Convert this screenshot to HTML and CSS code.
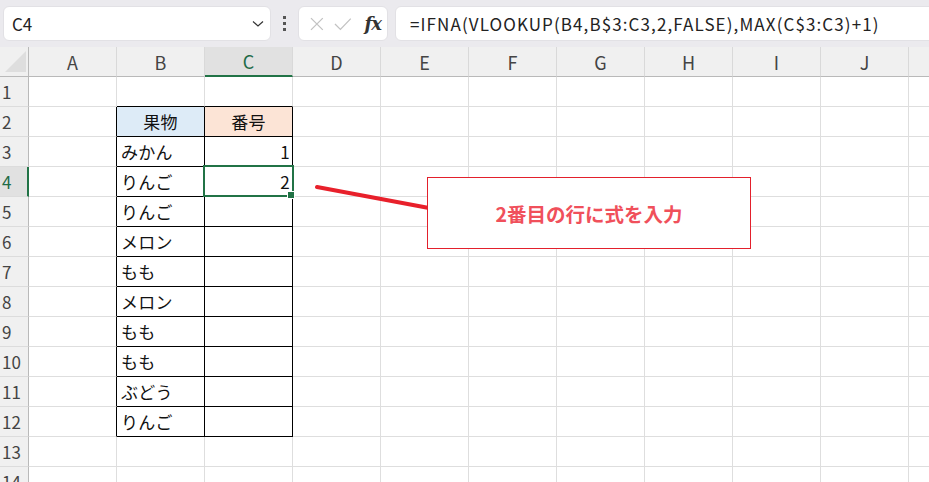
FILE: index.html
```
<!DOCTYPE html>
<html lang="ja">
<head>
    <meta charset="UTF-8">
    <title>VLOOKUP 番号</title>
    <link rel="stylesheet" href="styles.css">
</head>
<body>
    <div class="app">
        <div class="toolbar">
            <div class="namebox">
                <span>C4</span>
                <svg class="chevron" width="12" height="8" viewBox="0 0 12 8">
                    <path d="M1 1.5 L6 6 L11 1.5" fill="none" stroke="#333" stroke-width="1.2"/>
                </svg>
            </div>
            <div class="dots"><i></i><i></i><i></i></div>
            <div class="fxbox">
                <svg width="16" height="16" viewBox="0 0 16 16">
                    <path d="M2 2 L14 14 M14 2 L2 14" stroke="#c2c2c2" stroke-width="1.3" fill="none"/>
                </svg>
                <svg width="18" height="14" viewBox="0 0 18 14">
                    <path d="M1 7 L6.5 12.5 L17 1.5" stroke="#c2c2c2" stroke-width="1.3" fill="none"/>
                </svg>
                <span class="fx">fx</span>
            </div>
            <div class="formula">=IFNA(VLOOKUP(B4,B$3:C3,2,FALSE),MAX(C$3:C3)+1)</div>
        </div>

        <div class="sheet" id="sheet"></div>

        <svg class="pointer" width="120" height="30" viewBox="0 0 120 30">
            <path d="M2 4 L114 25" stroke="#e8202b" stroke-width="4" stroke-linecap="round"/>
        </svg>
        <div class="callout">2番目の行に式を入力</div>
    </div>

    <script>
        const sheet = document.getElementById('sheet');
        const colNames = ['A', 'B', 'C', 'D', 'E', 'F', 'G', 'H', 'I', 'J', 'K'];
        const data = {
            2: ['果物', '番号'],
            3: ['みかん', '1'],
            4: ['りんご', '2'],
            5: ['りんご', ''],
            6: ['メロン', ''],
            7: ['もも', ''],
            8: ['メロン', ''],
            9: ['もも', ''],
            10: ['もも', ''],
            11: ['ぶどう', ''],
            12: ['りんご', '']
        };

        function cell(cls, text) {
            const div = document.createElement('div');
            div.className = cls;
            if (text) div.textContent = text;
            sheet.appendChild(div);
            return div;
        }

        // header row
        cell('corner');
        colNames.forEach(function(name, i) {
            cell(i === 2 ? 'colhead active' : 'colhead', i < 10 ? name : '');
        });

        for (let r = 1; r <= 14; r++) {
            cell(r === 4 ? 'rowhead active' : 'rowhead', String(r));
            colNames.forEach(function(name, c) {
                let cls = 'cell';
                const inTable = r >= 2 && r <= 12;
                if (inTable && c === 0) cls += ' edge-right';
                if (r === 1 && (c === 1 || c === 2)) cls += ' edge-bottom';
                let text = '';
                if (inTable && (c === 1 || c === 2)) {
                    cls += ' boxed';
                    text = data[r][c - 1];
                    if (r === 2) cls += c === 1 ? ' head-blue' : ' head-peach';
                    else if (c === 2) cls += ' num';
                }
                if (r === 4 && c === 2) cls += ' selected';
                cell(cls, text);
            });
        }
    </script>
</body>
</html>
```

FILE: styles.css
```
* {
    margin: 0;
    padding: 0;
    box-sizing: border-box;
}

body {
    background: #fff;
    color: #222;
    font-family: "Noto Sans CJK JP", "Noto Sans", sans-serif;
    overflow: hidden;
}

.app {
    position: relative;
    width: 929px;
    height: 482px;
    overflow: hidden;
}

/* formula bar */
.toolbar {
    display: flex;
    align-items: center;
    height: 47px;
    padding-left: 3px;
    background: #ebeaee;
}

.namebox,
.fxbox,
.formula {
    flex-shrink: 0;
    height: 35px;
    background: #fff;
    border: 1px solid #e2e1e5;
    border-radius: 6px;
    display: flex;
    align-items: center;
}

.namebox {
    width: 268px;
    padding: 0 6px 0 8px;
    justify-content: space-between;
    font-size: 17px;
    color: #222;
}

.dots {
    flex-shrink: 0;
    width: 27px;
    display: flex;
    flex-direction: column;
    align-items: center;
    gap: 3px;
}

.dots i {
    display: block;
    width: 3px;
    height: 3px;
    background: #555;
}

.fxbox {
    width: 90px;
    padding: 0 6px 0 10px;
    gap: 9px;
}

.fx {
    font-family: "DejaVu Serif", "Liberation Serif", serif;
    font-style: italic;
    font-weight: bold;
    font-size: 18px;
    color: #333;
    margin-left: 4px;
    letter-spacing: -1px;
}

.formula {
    margin-left: 7px;
    width: 560px;
    padding-left: 14px;
    font-size: 17px;
    letter-spacing: 1.1px;
    color: #222;
    white-space: nowrap;
}

/* grid */
.sheet {
    display: grid;
    grid-template-columns: 29px repeat(10, 88px) 88px;
    grid-auto-rows: 30px;
}

.corner {
    background: #f0f0f0;
    border-right: 1px solid #b9b9b9;
    border-bottom: 1px solid #b9b9b9;
    position: relative;
}

.corner::after {
    content: "";
    position: absolute;
    left: 5px;
    top: 4px;
    width: 21px;
    height: 21px;
    background: #dedede;
    clip-path: polygon(100% 0, 100% 100%, 0 100%);
}

.colhead {
    background: #f0f0f0;
    border-right: 1px solid #d9d9d9;
    border-bottom: 1px solid #b9b9b9;
    display: flex;
    align-items: center;
    justify-content: center;
    font-size: 18px;
    color: #444;
}

.colhead.active {
    background: #e1e1e1;
    border-bottom: 2px solid #217346;
    color: #1e6b47;
}

.rowhead {
    background: #f0f0f0;
    border-right: 1px solid #b9b9b9;
    border-bottom: 1px solid #dcdcdc;
    display: flex;
    align-items: center;
    padding-left: 2px;
    font-size: 17px;
    color: #444;
}

.rowhead.active {
    background: #e1e1e1;
    border-right: 2px solid #217346;
    color: #1e6b47;
}

.cell {
    border-right: 1px solid #dedede;
    border-bottom: 1px solid #dedede;
    display: flex;
    align-items: center;
    padding: 0 4px;
    font-size: 17px;
    letter-spacing: 0.3px;
    color: #111;
    white-space: nowrap;
}

.cell.edge-right {
    border-right-color: #000;
}

.cell.edge-bottom {
    border-bottom-color: #000;
}

.cell.boxed {
    border-right-color: #000;
    border-bottom-color: #000;
}

.head-blue {
    background: #ddebf7;
    justify-content: center;
}

.head-peach {
    background: #fce4d6;
    justify-content: center;
}

.num {
    justify-content: flex-end;
    padding-right: 2px;
}

.selected {
    position: relative;
}

.selected::before {
    content: "";
    position: absolute;
    left: -2px;
    top: -2px;
    right: -2px;
    bottom: -1px;
    border: 2px solid #217346;
}

.selected::after {
    content: "";
    position: absolute;
    right: -3px;
    bottom: -3px;
    width: 6px;
    height: 6px;
    background: #217346;
    border: 1px solid #fff;
}

/* annotation */
.pointer {
    position: absolute;
    left: 315px;
    top: 183px;
}

.callout {
    position: absolute;
    left: 427px;
    top: 177px;
    width: 324px;
    height: 72px;
    background: #fff;
    border: 1px solid #e3202c;
    display: flex;
    align-items: center;
    justify-content: center;
    font-size: 19.5px;
    font-weight: bold;
    color: #f0505b;
}
```
